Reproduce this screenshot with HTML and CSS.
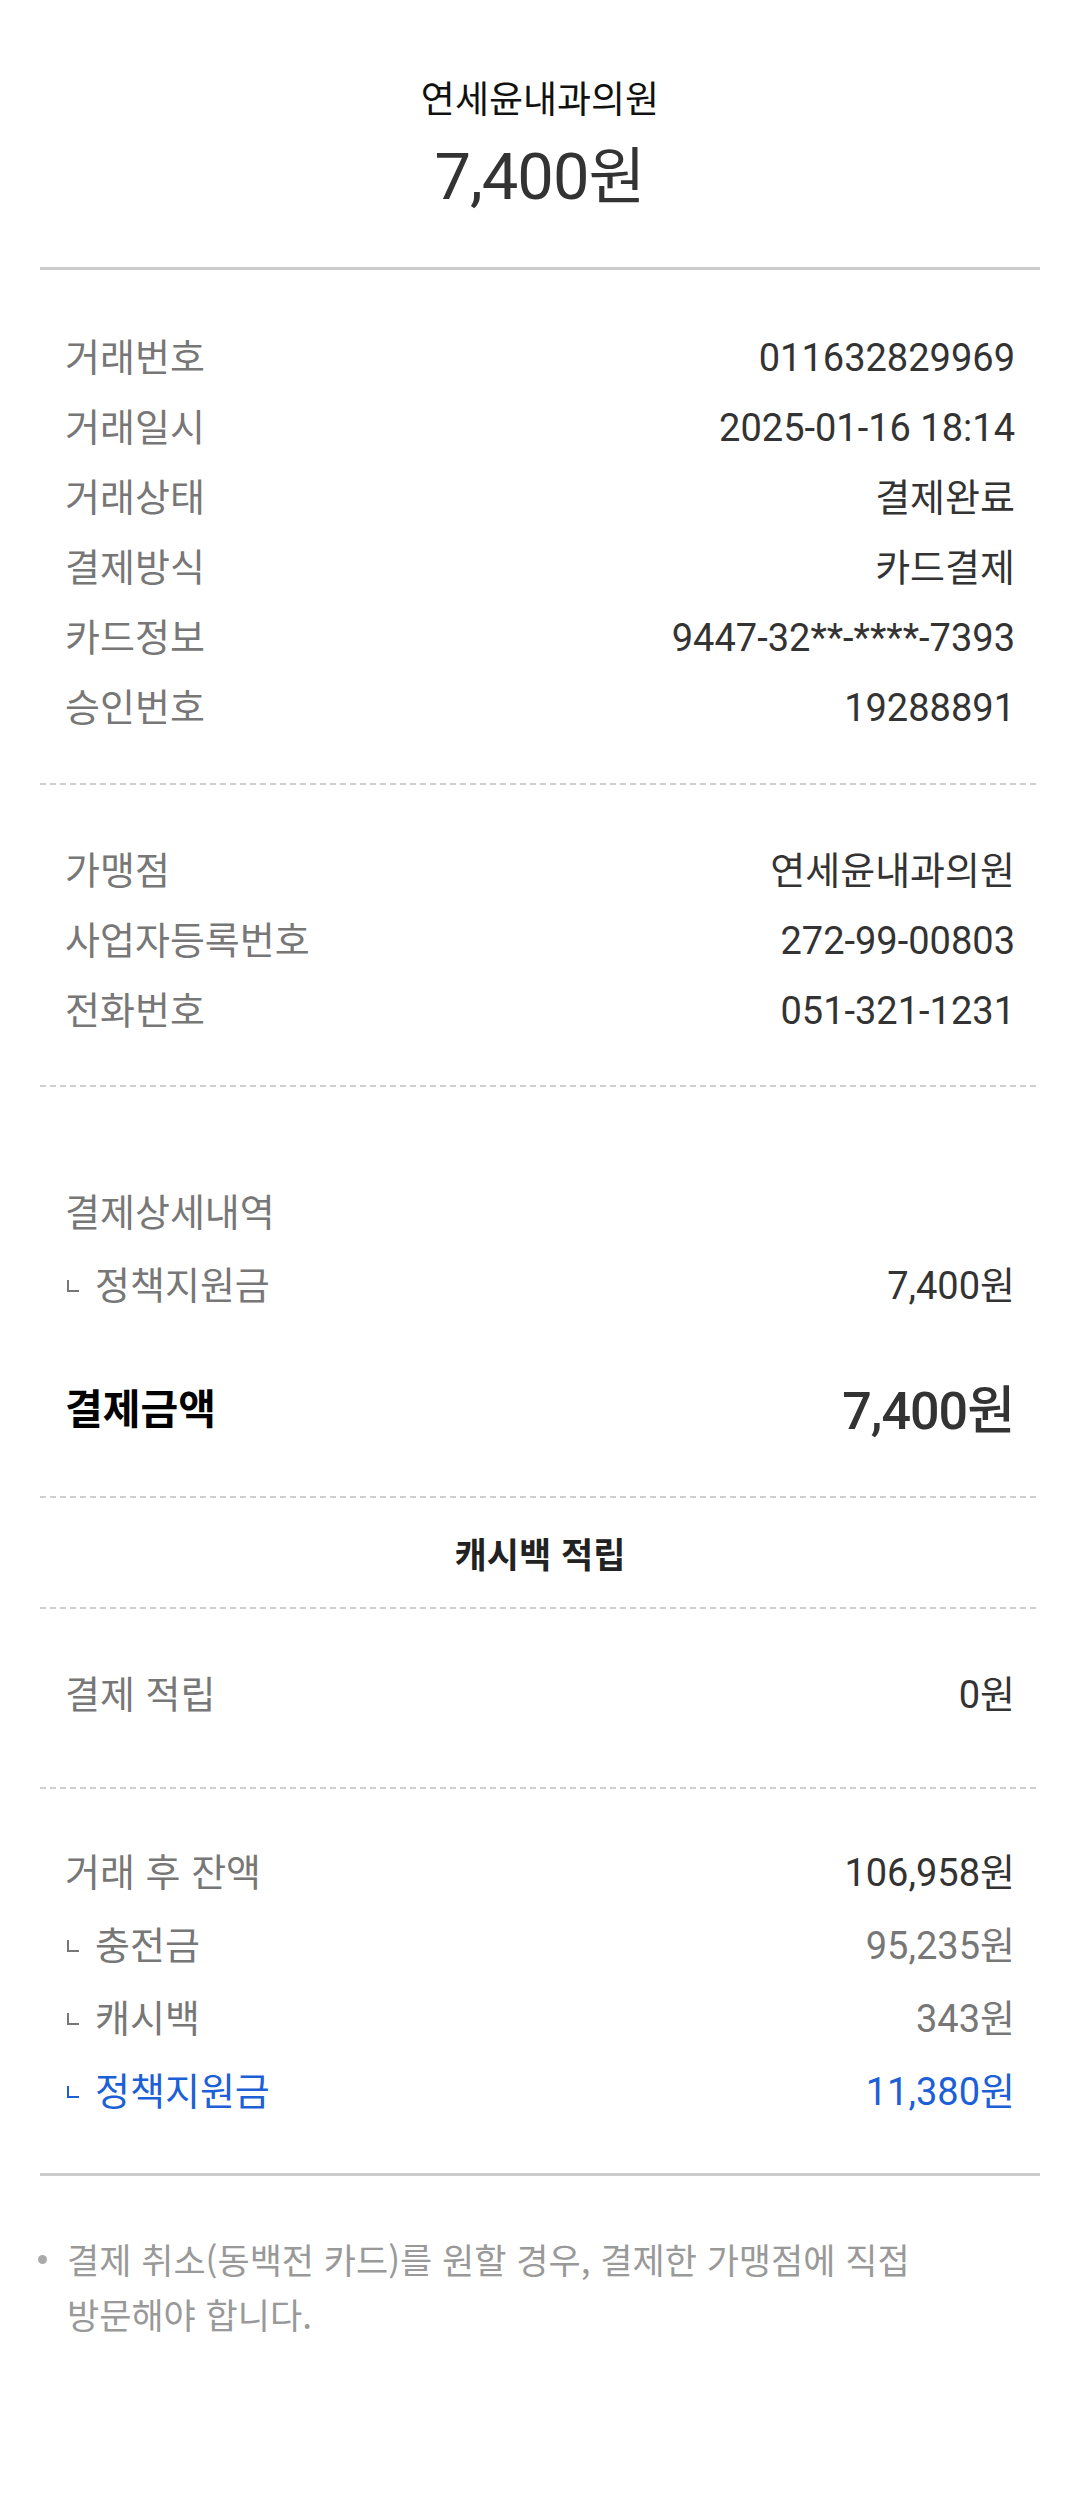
FILE: index.html
```html
<!DOCTYPE html>
<html lang="ko">
<head>
<meta charset="utf-8">
<title>결제 영수증</title>
<link rel="stylesheet" href="styles.css">
</head>
<body>
<div class="receipt">
  <header class="head">
    <div class="store">연세윤내과의원</div>
    <div class="total"><span class="total-num">7,400</span>원</div>
  </header>
  <div class="line-solid"></div>

  <section class="sec sec-info">
    <div class="row"><span class="label">거래번호</span><span class="value"><span class="num">011632829969</span></span></div>
    <div class="row"><span class="label">거래일시</span><span class="value"><span class="num">2025-01-16 18:14</span></span></div>
    <div class="row"><span class="label">거래상태</span><span class="value">결제완료</span></div>
    <div class="row"><span class="label">결제방식</span><span class="value">카드결제</span></div>
    <div class="row"><span class="label">카드정보</span><span class="value"><span class="num">9447-32**-****-7393</span></span></div>
    <div class="row"><span class="label">승인번호</span><span class="value"><span class="num">19288891</span></span></div>
  </section>
  <div class="line-dash"></div>

  <section class="sec sec-merchant">
    <div class="row"><span class="label">가맹점</span><span class="value">연세윤내과의원</span></div>
    <div class="row"><span class="label">사업자등록번호</span><span class="value"><span class="num">272-99-00803</span></span></div>
    <div class="row"><span class="label">전화번호</span><span class="value"><span class="num">051-321-1231</span></span></div>
  </section>
  <div class="line-dash"></div>

  <section class="sec sec-detail">
    <div class="row row-73"><span class="label">결제상세내역</span></div>
    <div class="row row-73"><span class="label sub"><i class="corner"></i>정책지원금</span><span class="value"><span class="num">7,400</span>원</span></div>
    <div class="row row-pay"><span class="pay-label">결제금액</span><span class="pay-value"><span class="pay-num">7,400</span>원</span></div>
  </section>
  <div class="line-dash"></div>

  <section class="sec-title">캐시백 적립</section>
  <div class="line-dash"></div>

  <section class="sec sec-earn">
    <div class="row"><span class="label">결제 적립</span><span class="value"><span class="num">0</span>원</span></div>
  </section>
  <div class="line-dash"></div>

  <section class="sec sec-balance">
    <div class="row row-73"><span class="label">거래 후 잔액</span><span class="value"><span class="num">106,958</span>원</span></div>
    <div class="row row-73"><span class="label sub"><i class="corner"></i>충전금</span><span class="value muted"><span class="num">95,235</span>원</span></div>
    <div class="row row-73"><span class="label sub"><i class="corner"></i>캐시백</span><span class="value muted"><span class="num">343</span>원</span></div>
    <div class="row row-73 blue"><span class="label sub"><i class="corner"></i>정책지원금</span><span class="value"><span class="num">11,380</span>원</span></div>
  </section>
  <div class="line-solid"></div>

  <section class="note">
    <p class="note-text">결제 취소(동백전 카드)를 원할 경우, 결제한 가맹점에 직접<br>방문해야 합니다.</p>
  </section>
</div>
</body>
</html>
```
FILE: styles.css
```css
* { box-sizing: border-box; }

html, body {
  margin: 0;
  padding: 0;
  background: #ffffff;
}

body {
  font-family: Roboto, "Noto Sans CJK KR", "Noto Sans", sans-serif;
  color: #333333;
}

.receipt {
  margin: 0 40px;
}

/* header */
.head {
  padding: 72px 0 50px;
  display: flex;
  flex-direction: column;
  align-items: center;
}

.store {
  font-family: "Noto Sans CJK KR", sans-serif;
  font-size: 37px;
  line-height: 50px;
  color: #111111;
}

.total {
  margin-top: 10px;
  font-size: 62px;
  line-height: 80px;
  color: #333333;
  font-family: "Noto Sans CJK KR", sans-serif;
}

.total-num {
  font-family: Roboto, sans-serif;
  font-size: 65px;
  letter-spacing: -1px;
}

/* separators */
.line-solid {
  height: 3px;
  background: #cccccc;
}

.line-dash {
  height: 2px;
  background-image: repeating-linear-gradient(to right, #cfcfcf 0 6px, transparent 6px 10px);
}

/* rows */
.row {
  display: flex;
  justify-content: space-between;
  align-items: center;
  height: 70px;
  padding: 0 25px;
}

.row-73 { height: 73px; }

.label {
  font-family: "Noto Sans CJK KR", sans-serif;
  font-size: 38px;
  color: #777777;
  display: flex;
  align-items: center;
}

.value {
  font-family: "Noto Sans CJK KR", sans-serif;
  font-size: 38px;
  color: #333333;
  white-space: nowrap;
}

.num {
  font-family: Roboto, sans-serif;
  font-size: 38px;
}

.muted { color: #777777; }

.blue .label,
.blue .value { color: #1d5fd6; }

.corner {
  display: inline-block;
  width: 12px;
  height: 12px;
  border-left: 2px solid currentColor;
  border-bottom: 2px solid currentColor;
  margin: 6px 16px 0 2px;
}

/* sections */
.sec-info { padding: 49px 0 44px; }
.sec-merchant { padding: 47px 0 43px; }
.sec-detail { padding: 86px 0 50px; }
.sec-earn { padding: 47px 0 61px; }
.sec-balance { padding: 44px 0 48px; }

.row-pay {
  height: 80px;
  margin-top: 47px;
}

.pay-label {
  font-family: "Noto Sans CJK KR", sans-serif;
  font-size: 41px;
  font-weight: 700;
  color: #000000;
}

.pay-value {
  font-family: "Noto Sans CJK KR", sans-serif;
  font-size: 52px;
  font-weight: 500;
  color: #333333;
}

.pay-num {
  font-family: Roboto, sans-serif;
  font-size: 52px;
  font-weight: 500;
  letter-spacing: -1px;
}

.sec-title {
  height: 109px;
  display: flex;
  align-items: center;
  justify-content: center;
  font-family: "Noto Sans CJK KR", sans-serif;
  font-size: 35px;
  font-weight: 700;
  color: #222222;
}

/* note */
.note {
  padding-top: 55px;
}

.note-text {
  position: relative;
  margin: 0;
  padding-left: 27px;
  font-family: "Noto Sans CJK KR", sans-serif;
  font-size: 35px;
  line-height: 55px;
  color: #999999;
}

.note-text::before {
  content: "";
  position: absolute;
  left: -2px;
  top: 24px;
  width: 9px;
  height: 9px;
  border-radius: 50%;
  background: #aaaaaa;
}
```
